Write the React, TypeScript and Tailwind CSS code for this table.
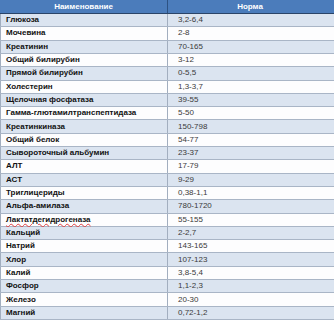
const rows: [string, string][] = [
  ["Глюкоза", "3,2-6,4"],
  ["Мочевина", "2-8"],
  ["Креатинин", "70-165"],
  ["Общий билирубин", "3-12"],
  ["Прямой билирубин", "0-5,5"],
  ["Холестерин", "1,3-3,7"],
  ["Щелочная фосфатаза", "39-55"],
  ["Гамма-глютамилтранспептидаза", "5-50"],
  ["Креатинкиназа", "150-798"],
  ["Общий белок", "54-77"],
  ["Сывороточный альбумин", "23-37"],
  ["АЛТ", "17-79"],
  ["АСТ", "9-29"],
  ["Триглицериды", "0,38-1,1"],
  ["Альфа-амилаза", "780-1720"],
  ["Лактатдегидрогеназа", "55-155"],
  ["Кальций", "2-2,7"],
  ["Натрий", "143-165"],
  ["Хлор", "107-123"],
  ["Калий", "3,8-5,4"],
  ["Фосфор", "1,1-2,3"],
  ["Железо", "20-30"],
  ["Магний", "0,72-1,2"],
];

export default function App() {
  return (
    <div className="w-[334px] h-[320px] overflow-hidden bg-white font-['Liberation_Sans',Arial,sans-serif] text-[8px] leading-none">
      <div className="grid h-full grid-rows-[14px_repeat(23,minmax(0,1fr))]">
        <div className="grid grid-cols-[168px_1fr] bg-[#4b7cbb] border-b border-[#2a4468] text-white font-bold">
          <div className="flex items-center justify-center border-r border-[#2d5283]">Наименование</div>
          <div className="flex items-center justify-center pr-[2px]">Норма</div>
        </div>
        {rows.map(([name, norm], i) => (
          <div
            key={name}
            className={
              "grid grid-cols-[168px_1fr] border-b border-[#a9b5c6] " +
              (i % 2 === 0 ? "bg-[#dbe4f0]" : "bg-[#fdfdfe]")
            }
          >
            <div className="flex items-center border-l border-r border-[#a2aebf] pl-[5px] font-bold text-[#111]">
              {name === "Лактатдегидрогеназа" ? (
                <span className="underline decoration-wavy decoration-[#e04040] decoration-1 underline-offset-[1px]">
                  {name}
                </span>
              ) : (
                name
              )}
            </div>
            <div className="flex items-center pl-[10px] text-[#3a3a3a]">{norm}</div>
          </div>
        ))}
      </div>
    </div>
  );
}
